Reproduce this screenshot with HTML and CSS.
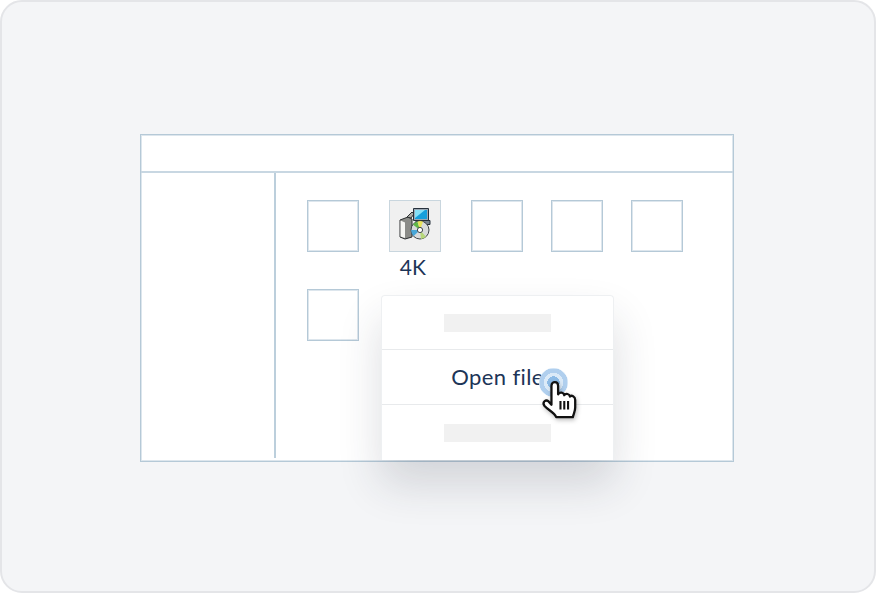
FILE: index.html
```html
<!DOCTYPE html>
<html lang="en">
<head>
    <meta charset="UTF-8">
    <meta name="viewport" content="width=device-width, initial-scale=1.0">
    <title>Open file</title>
    <link rel="stylesheet" href="styles.css">
</head>
<body>
    <div class="stage">
        <div class="window">
            <div class="window-header"></div>
            <div class="window-body">
                <div class="sidebar"></div>
                <div class="files">
                    <div class="tile"></div>
                    <div class="file">
                        <div class="tile tile-active">
                            <svg class="setup-icon" width="32" height="32" viewBox="0 0 32 32">
                                <!-- box -->
                                <path d="M1 12 L9 9 L13 11 V29 L6 31 L1 29 Z" fill="#8b8c88" stroke="#2c2f31" stroke-width="1"/>
                                <path d="M1.5 12.5 L6 14.5 V30 L1.5 28.5 Z" fill="#f6f6f3"/>
                                <path d="M8 9 L13 4 L15 6 L12 10 Z" fill="#a9aaa5" stroke="#2c2f31" stroke-width="1"/>
                                <!-- monitor -->
                                <path d="M14.5 0.5 H29.5 V12.5 H14.5 Z" fill="#9aa7b3" stroke="#27303c" stroke-width="1"/>
                                <path d="M16 2 H28 V11 H16 Z" fill="#169fdc"/>
                                <path d="M16 2 H26 L16 10 Z" fill="#86e0f7"/>
                                <path d="M17 12.5 H31 V16.5 H17 Z" fill="#78838f" stroke="#27303c" stroke-width="1"/>
                                <!-- disc -->
                                <circle cx="21" cy="22" r="9" fill="#d8dadb" stroke="#40454a" stroke-width="1"/>
                                <path d="M21 22 L13.8 16.6 A9 9 0 0 1 18.5 13.4 Z" fill="#5fb548"/>
                                <path d="M21 22 L18.5 13.4 A9 9 0 0 1 24 13.5 Z" fill="#e8e25a"/>
                                <path d="M21 22 L14.5 28.2 A9 9 0 0 1 12.1 22 Z" fill="#47a6d8"/>
                                <path d="M21 22 L27 28.7 A9 9 0 0 1 22 30.9 Z" fill="#b7d77a"/>
                                <circle cx="21" cy="22" r="2.6" fill="#fff" stroke="#40454a" stroke-width="1"/>
                            </svg>
                        </div>
                        <div class="file-name">4K</div>
                    </div>
                    <div class="tile"></div>
                    <div class="tile"></div>
                    <div class="tile"></div>
                    <div class="tile"></div>
                </div>
            </div>

            <div class="menu">
                <div class="menu-row"><span class="placeholder"></span></div>
                <div class="menu-row menu-label">Open file</div>
                <div class="menu-row"><span class="placeholder"></span></div>
            </div>

            <div class="ripple"></div>
            <svg class="hand" width="38" height="42" viewBox="0 0 40 44">
                <path d="M11 7 C11 2 18 2 18 7 V16 C20 13 24 14 24.5 17 C26 14.5 30 15.5 30.5 18.5 C32 16.5 36 18 36 22 V30 C36 34 34.5 36 33.5 40 H16 C14 35 8 33 3.5 28 C1 24 5 21 8 23.5 L11 27 Z" fill="#fff" stroke="#111" stroke-width="2.4" stroke-linejoin="round"/>
                <path d="M20.5 23 V32 M24.5 23 V32 M28.5 23 V32" fill="none" stroke="#111" stroke-width="2.2"/>
            </svg>
        </div>
    </div>
</body>
</html>
```

FILE: styles.css
```css
* {
    box-sizing: border-box;
}

body {
    margin: 0;
    background: #fff;
    font-family: Lato, "Open Sans", sans-serif;
    color: #1d3557;
}

.stage {
    width: 876px;
    height: 593px;
    display: flex;
    align-items: center;
    justify-content: center;
    background: #f4f5f7;
    border: 2px solid #e4e5e8;
    border-radius: 22px;
}

.window {
    position: relative;
    width: 594px;
    height: 328px;
    margin-left: -2px;
    margin-top: 3px;
    display: flex;
    flex-direction: column;
    background: #fff;
    border: 1px solid #b5c9d7;
    box-shadow: inset 0 0 0 1px #dde6ed;
}

.window-header {
    height: 38px;
    border-bottom: 2px solid #c8d7e2;
}

.window-body {
    flex: 1;
    display: flex;
}

.sidebar {
    width: 135px;
    margin-bottom: 3px;
    border-right: 2px solid #bccfdc;
}

.files {
    flex: 1;
    padding: 27px 0 0 31px;
    display: grid;
    grid-template-columns: 82px 82px 80px 80px 52px;
    grid-auto-rows: 89px;
}

.tile {
    width: 52px;
    height: 52px;
    display: flex;
    align-items: center;
    justify-content: center;
    border: 1px solid #b5c9d7;
    box-shadow: inset 0 0 0 1px #dde6ed;
}

.tile-active {
    background: #f0f0f0;
    border-color: #c9d6de;
    box-shadow: none;
}

.setup-icon {
    margin-bottom: 4px;
}

.file-name {
    width: 52px;
    margin-top: 3px;
    margin-left: -2px;
    text-align: center;
    font-size: 21px;
    line-height: 24px;
    letter-spacing: 0.3px;
}

.menu {
    position: absolute;
    left: 240px;
    top: 160px;
    width: 233px;
    height: 165px;
    display: flex;
    flex-direction: column;
    background: #fff;
    border: 1px solid #eef0f2;
    border-bottom: 0;
    border-radius: 4px 4px 0 0;
    box-shadow: 0 24px 44px rgba(40, 45, 60, 0.16);
}

.menu-row {
    flex: none;
    height: 55px;
    display: flex;
    align-items: center;
    justify-content: center;
    border-bottom: 1px solid #e8eaec;
}

.menu-row:first-child {
    height: 54px;
}

.menu-row:last-child {
    flex: 1;
    border-bottom: 0;
}

.menu-label {
    padding-bottom: 2px;
    font-size: 22px;
    letter-spacing: 0.4px;
}

.placeholder {
    display: block;
    width: 107px;
    height: 18px;
    background: #f1f1f1;
}

.ripple {
    position: absolute;
    left: 398px;
    top: 233px;
    width: 29px;
    height: 29px;
    border-radius: 50%;
    background: radial-gradient(circle, #8dbbe6 0 30%, #dbeaf8 30% 48%, #b0cfee 48% 68%, #d0e3f5 68% 100%);
}

.hand {
    position: absolute;
    left: 400px;
    top: 244px;
    filter: drop-shadow(1px 2px 2px rgba(0, 0, 0, 0.25));
}
```
